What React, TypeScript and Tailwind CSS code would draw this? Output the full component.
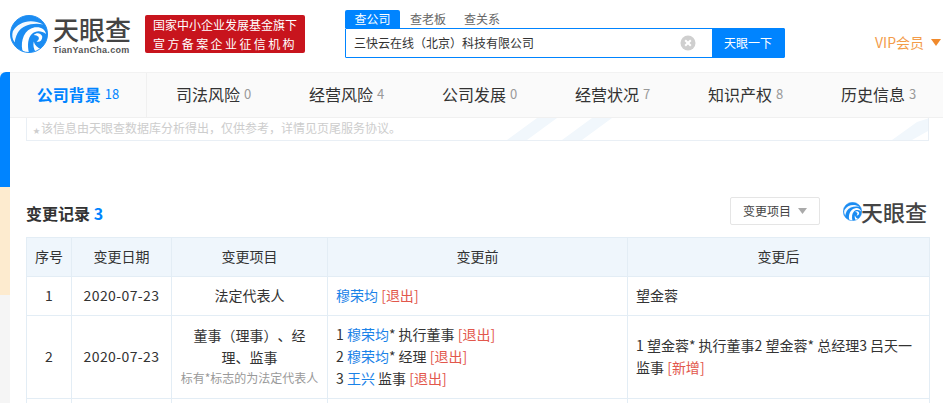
import React from "react";

const cjk = { fontFamily: '"Noto Sans CJK SC", "Noto Sans", sans-serif' };

function Logo({ size }: { size: number }) {
  return (
    <svg width={size} height={size} viewBox="0 0 40 40" className="shrink-0">
      <circle cx="20" cy="20" r="19.5" fill="#1b8cf2" />
      <path d="M3 17C9 7 22 3 35 10C25 8 13 10 8 19C6 23 5 27 5 29C2 25 2 21 3 17Z" fill="#fff" opacity="0.95" />
      <path d="M13 37C11 27 15 15 26 13C32 12 37 15 38 20C33 16 27 16 23 20C19 24 18 31 20 40C17 40 15 39 13 37Z" fill="#fff" />
      <path d="M25 21C28 18 33 19 34 23C34 27 31 29 28 28C30 27 31 25 30 23C29 22 27 21 25 21Z" fill="#fff" />
      <path d="M25 28C26 32 29 35 33 36C31 37 29 38 27 39C25 36 24 32 25 28Z" fill="#fff" />
      <circle cx="20" cy="20" r="19.5" fill="none" stroke="#1b8cf2" strokeWidth="1" />
    </svg>
  );
}

function Tab({ label, n, active, w }: { label: string; n: string; active?: boolean; w: string }) {
  return (
    <div className={`${w} shrink-0 flex items-center justify-center h-full pb-[2px] ${active ? "border-r border-[#f0f0f0]" : ""}`}>
      <span className={`text-[16px] ${active ? "text-[#0084ff] font-bold" : "text-[#333]"}`}>{label}</span>
      <span className={`ml-1 text-[13px] ${active ? "text-[#0084ff]" : "text-[#999]"}`}>{n}</span>
    </div>
  );
}

const Red = ({ t }: { t: string }) => <span className="text-[#e2574c]">[{t}]</span>;
const Blue = ({ t }: { t: string }) => <span className="text-[#1a82e8]">{t}</span>;

const th = "border border-[#e3edf5] bg-[#eff6fc] font-normal text-center text-[#333] text-[14px] p-0 pb-[2px]";
const td = "border border-[#e3edf5] text-[14px] text-[#333] leading-[22px] pb-[2px] [text-spacing-trim:space-all]";

export default function App() {
  return (
    <div style={cjk} className="w-[943px] h-[403px] overflow-hidden bg-white flex flex-col text-[#333]">
      <header className="h-[72px] shrink-0 flex items-start">
        <div className="ml-[10px] mt-[15px] flex">
          <Logo size={38} />
          <div className="ml-[5px] w-[80px] -mt-[3px]">
            <div className="text-[26px] leading-[33px] font-medium text-[#444] whitespace-nowrap">天眼查</div>
            <div style={{ fontFamily: '"Liberation Sans", sans-serif' }} className="text-[9px] leading-[10px] font-bold text-[#555] tracking-[0.3px] whitespace-nowrap">TianYanCha.com</div>
          </div>
        </div>
        <div className="ml-[12px] mt-[15px] w-[160px] h-[38px] bg-[#c8141d] rounded-[2px] text-white text-[12px] leading-[19px] text-center flex flex-col justify-center whitespace-nowrap">
          <div>国家中小企业发展基金旗下</div>
          <div className="tracking-[2.4px]">宣方备案企业征信机构</div>
        </div>
        <div className="ml-[40px] mt-[10px] w-[440px]">
          <div className="flex h-[18px] text-[12px] leading-[18px]">
            <div className="w-[55px] bg-[#0084ff] text-white text-center rounded-t-[2px]">查公司</div>
            <div className="ml-[10px] text-[#666]">查老板</div>
            <div className="ml-[18px] text-[#666]">查关系</div>
          </div>
          <div className="flex h-[30px] border border-[#0084ff] rounded-[1px]">
            <div className="flex-1 flex items-center pl-[8px] pr-[8px] text-[12px] text-[#333] [text-spacing-trim:space-all]">
              <span className="flex-1 whitespace-nowrap">三快云在线（北京）科技有限公司</span>
              <svg width="16" height="16" viewBox="0 0 16 16">
                <circle cx="8" cy="8" r="7.5" fill="#cfcfcf" />
                <path d="M5.2 5.2L10.8 10.8M10.8 5.2L5.2 10.8" stroke="#fff" strokeWidth="2" />
              </svg>
              <span className="w-[8px]" />
            </div>
            <div className="w-[72px] bg-[#0084ff] text-white text-[12px] flex items-center justify-center">天眼一下</div>
          </div>
        </div>
        <div className="ml-[90px] mt-[33px] flex items-center text-[14px] leading-[18px] text-[#f39c4a] whitespace-nowrap">
          VIP会员
          <svg width="10" height="7" viewBox="0 0 10 7" className="ml-[7px]"><path d="M0 0H10L5 7Z" fill="#f08a2c" /></svg>
        </div>
      </header>

      <div className="flex flex-1 min-h-0">
        <div className="w-[10px] shrink-0 flex flex-col bg-[#f5f5f5]">
          <div className="h-[115px] bg-[#0084ff] rounded-tl-[6px]" />
          <div className="h-[108px] bg-[#fdebcf]" />
        </div>
        <main className="flex-1 min-w-0">
          <nav className="h-[46px] flex bg-[#fafafa] border-t border-[#f2f2f2] border-b overflow-hidden border-b-[#f0f0f0]">
            <Tab w="w-[137px]" active label="公司背景" n="18" />
            <Tab w="w-[133px]" label="司法风险" n="0" />
            <Tab w="w-[133px]" label="经营风险" n="4" />
            <Tab w="w-[133px]" label="公司发展" n="0" />
            <Tab w="w-[133px]" label="经营状况" n="7" />
            <Tab w="w-[133px]" label="知识产权" n="8" />
            <Tab w="w-[133px]" label="历史信息" n="3" />
          </nav>
          <div className="ml-[16px] w-[903px]">
            <div className="relative h-[23px] border border-t-0 border-[#e9eff5] pl-[6px] text-[12px] leading-[20px] text-[#cdcdcd] whitespace-nowrap overflow-hidden">
              <span className="text-[7px] mr-[1px]">★</span>该信息由天眼查数据库分析得出，仅供参考，详情见页尾服务协议。
              <svg className="absolute left-[460px] top-0" width="443" height="22" viewBox="0 0 443 22">
                <path d="M20 22L50 0H70L40 22ZM75 22L105 0H125L95 22ZM430 4L443 0V12L425 22H405Z" fill="#f1f7fc" />
              </svg>
            </div>
            <div className="mt-[50px] mb-[6px] h-[40px] flex items-center">
              <div className="mt-[4px] text-[16px] font-bold text-[#333] whitespace-nowrap">变更记录 <span className="text-[#0084ff]">3</span></div>
              <div className="ml-auto w-[90px] h-[28px] border border-[#e5e5e5] rounded-[2px] flex items-center justify-center text-[12px] text-[#444]">
                变更项目
                <svg width="9" height="6" viewBox="0 0 9 6" className="ml-[7px]"><path d="M0 0H9L4.5 6Z" fill="#aaa" /></svg>
              </div>
              <div className="ml-[23px] mr-[2px] flex items-center w-[84px]">
                <Logo size={19} />
                <span className="-ml-[1px] text-[22px] leading-[24px] font-medium text-[#444] whitespace-nowrap">天眼查</span>
              </div>
            </div>
            <table className="w-[903px] table-fixed border-collapse">
              <colgroup>
                <col className="w-[45px]" />
                <col className="w-[100px]" />
                <col className="w-[156px]" />
                <col className="w-[300px]" />
                <col className="w-[302px]" />
              </colgroup>
              <thead>
                <tr className="h-[39px]">
                  <th className={th}>序号</th>
                  <th className={th}>变更日期</th>
                  <th className={th}>变更项目</th>
                  <th className={th}>变更前</th>
                  <th className={th}>变更后</th>
                </tr>
              </thead>
              <tbody>
                <tr className="h-[39px]">
                  <td className={`${td} text-center`}>1</td>
                  <td className={`${td} text-center tracking-[0.4px]`}>2020-07-23</td>
                  <td className={`${td} text-center`}>法定代表人</td>
                  <td className={`${td} px-[8px]`}><Blue t="穆荣均" /> <Red t="退出" /></td>
                  <td className={`${td} px-[8px]`}>望金蓉</td>
                </tr>
                <tr className="h-[83px]">
                  <td className={`${td} text-center`}>2</td>
                  <td className={`${td} text-center tracking-[0.4px]`}>2020-07-23</td>
                  <td className={`${td} text-center px-[20px]`}>
                    董事（理事）、经理、监事
                    <div className="text-[12px] leading-[20px] text-[#999] whitespace-nowrap -mx-[20px]">标有*标志的为法定代表人</div>
                  </td>
                  <td className={`${td} px-[8px]`}>
                    <div>1 <Blue t="穆荣均" />* 执行董事 <Red t="退出" /></div>
                    <div>2 <Blue t="穆荣均" />* 经理 <Red t="退出" /></div>
                    <div>3 <Blue t="王兴" /> 监事 <Red t="退出" /></div>
                  </td>
                  <td className={`${td} px-[8px]`}>1 望金蓉* 执行董事2 望金蓉* 总经理3 吕天一 监事 <Red t="新增" /></td>
                </tr>
                <tr className="h-[40px]">
                  <td className={td} /><td className={td} /><td className={td} /><td className={td} /><td className={td} />
                </tr>
              </tbody>
            </table>
          </div>
        </main>
      </div>
    </div>
  );
}
